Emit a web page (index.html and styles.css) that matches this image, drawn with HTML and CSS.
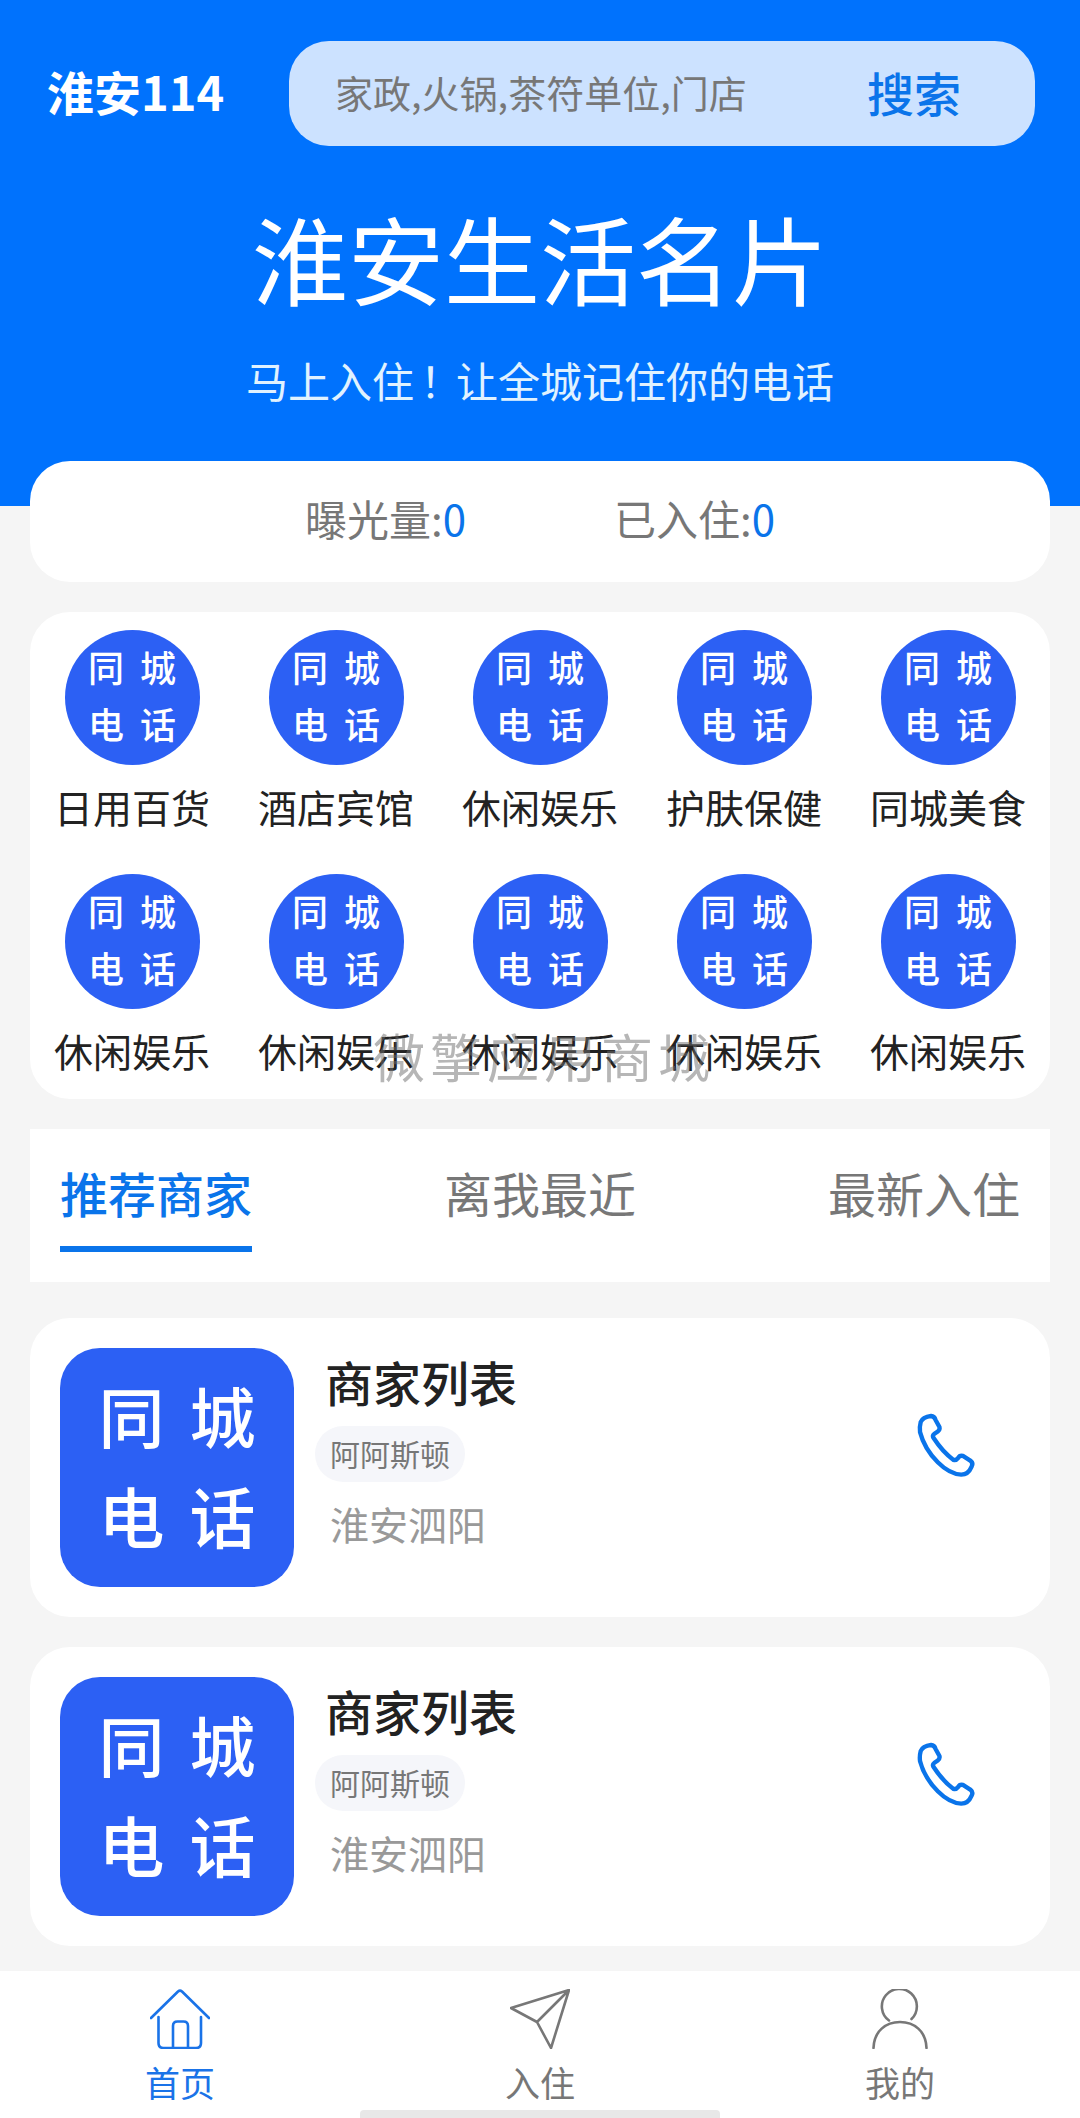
FILE: index.html
```html
<!DOCTYPE html>
<html lang="zh-CN">
<head>
    <meta charset="UTF-8">
    <meta name="viewport" content="width=device-width, initial-scale=1.0">
    <title>淮安生活名片</title>
    <link rel="stylesheet" href="styles.css">
</head>
<body>
    <header class="header">
        <div class="top-bar">
            <div class="logo">淮安114</div>
            <div class="search">
                <span class="search-hint">家政,火锅,茶符单位,门店</span>
                <span class="search-btn">搜索</span>
            </div>
        </div>
        <h1>淮安生活名片</h1>
        <p>马上入住<span class="bang">！</span>让全城记住你的电话</p>
    </header>

    <main class="main">
        <section class="stats">
            <div>曝光量:<span class="num">0</span></div>
            <div>已入住:<span class="num">0</span></div>
        </section>

        <section class="cats">
            <div class="cat"><div class="badge">同 城<br>电 话</div><span>日用百货</span></div>
            <div class="cat"><div class="badge">同 城<br>电 话</div><span>酒店宾馆</span></div>
            <div class="cat"><div class="badge">同 城<br>电 话</div><span>休闲娱乐</span></div>
            <div class="cat"><div class="badge">同 城<br>电 话</div><span>护肤保健</span></div>
            <div class="cat"><div class="badge">同 城<br>电 话</div><span>同城美食</span></div>
            <div class="cat"><div class="badge">同 城<br>电 话</div><span>休闲娱乐</span></div>
            <div class="cat"><div class="badge">同 城<br>电 话</div><span>休闲娱乐</span></div>
            <div class="cat"><div class="badge">同 城<br>电 话</div><span>休闲娱乐</span></div>
            <div class="cat"><div class="badge">同 城<br>电 话</div><span>休闲娱乐</span></div>
            <div class="cat"><div class="badge">同 城<br>电 话</div><span>休闲娱乐</span></div>
        </section>

        <nav class="tabs">
            <a class="tab active">推荐商家</a>
            <a class="tab">离我最近</a>
            <a class="tab">最新入住</a>
        </nav>

        <ul class="shops">
            <li class="shop">
                <div class="shop-logo">同 城<br>电 话</div>
                <div class="shop-info">
                    <h3>商家列表</h3>
                    <span class="tag">阿阿斯顿</span>
                    <p>淮安泗阳</p>
                </div>
                <svg class="phone" viewBox="170 95 185 200" width="62" height="67" fill="none" stroke="#0a74ea" stroke-width="13" stroke-linejoin="round">
                    <path d="M184 125Q190 110 215 107Q225 108 228 118L240 140Q242 148 235 153L225 160Q218 165 222 172Q250 215 282 238Q290 240 296 232Q300 224 310 226L332 240Q342 248 336 258Q326 282 305 282Q270 280 235 245Q195 205 182 155Q180 140 184 125Z"/>
                </svg>
            </li>
            <li class="shop">
                <div class="shop-logo">同 城<br>电 话</div>
                <div class="shop-info">
                    <h3>商家列表</h3>
                    <span class="tag">阿阿斯顿</span>
                    <p>淮安泗阳</p>
                </div>
                <svg class="phone" viewBox="170 95 185 200" width="62" height="67" fill="none" stroke="#0a74ea" stroke-width="13" stroke-linejoin="round">
                    <path d="M184 125Q190 110 215 107Q225 108 228 118L240 140Q242 148 235 153L225 160Q218 165 222 172Q250 215 282 238Q290 240 296 232Q300 224 310 226L332 240Q342 248 336 258Q326 282 305 282Q270 280 235 245Q195 205 182 155Q180 140 184 125Z"/>
                </svg>
            </li>
        </ul>
    </main>

    <div class="watermark">微擎应用商城</div>

    <footer class="tabbar">
        <a class="tabbar-item active">
            <svg viewBox="0 0 60 60" width="60" height="60" fill="none" stroke="#1a73e8" stroke-width="2.6" stroke-linecap="round" stroke-linejoin="round">
                <path d="M1 29L28 2.500Q30 .8 32 2.500L59 29"/>
                <path d="M8.500 28V54Q8.500 59 13.500 59H46Q51 59 51 54V28"/>
                <path d="M23 59V37Q23 32.500 27.500 32.500H33.500Q38 32.500 38 37V59"/>
            </svg>
            <span>首页</span>
        </a>
        <a class="tabbar-item">
            <svg viewBox="0 0 60 60" width="60" height="60" fill="none" stroke="#777" stroke-width="2.6" stroke-linecap="round" stroke-linejoin="round">
                <path d="M59 1L1 19L27 33L41 59ZM59 1L27 33"/>
            </svg>
            <span>入住</span>
        </a>
        <a class="tabbar-item">
            <svg viewBox="0 0 60 60" width="60" height="60" fill="none" stroke="#777" stroke-width="2.6" stroke-linecap="round" stroke-linejoin="round">
                <path d="M41.500 30A17.500 17.500 0 1 0 19 31.500"/>
                <path d="M3.500 59C4 42 16 33 30 33C44 33 56 42 56.500 59"/>
            </svg>
            <span>我的</span>
        </a>
        <div class="home-bar"></div>
    </footer>
</body>
</html>
```

FILE: styles.css
```css
* {
    margin: 0;
    padding: 0;
    box-sizing: border-box;
    font-family: "Noto Sans CJK SC", "Noto Sans", sans-serif;
}
body {
    background: #f5f5f5;
    width: 1080px;
    height: 2118px;
    overflow: hidden;
    position: relative;
    display: flex;
    flex-direction: column;
}
.header {
    background: #0072fd;
    flex: none;
    height: 506px;
    padding-top: 41px;
    color: white;
    text-align: center;
}
.top-bar {
    display: flex;
    align-items: center;
    justify-content: space-between;
    padding: 0 45px 0 47px;
}
.logo {
    font-size: 47px;
    font-weight: 700;
    line-height: 100px;
    padding-bottom: 5px;
}
.search {
    width: 746px;
    height: 105px;
    background: #cce2ff;
    border-radius: 40px;
    display: flex;
    align-items: center;
    justify-content: space-between;
    padding: 0 74px 5px 46px;
}
.search-hint {
    font-size: 38px;
    color: #777;
}
.search-btn {
    font-size: 47px;
    font-weight: 500;
    color: #0a74ea;
}
.header h1 {
    font-size: 96px;
    font-weight: 400;
    line-height: 120px;
    margin-top: 51px;
}
.header p {
    font-size: 42px;
    line-height: 60px;
    margin-top: 33px;
    color: #e0f2ff;
}
.bang {
    display: inline-block;
    margin: 0 -6px 0 6px;
}
.main {
    flex: 1;
    min-height: 0;
    padding: 0 30px;
}
.stats {
    background: white;
    height: 121px;
    margin-top: -45px;
    border-radius: 40px;
    display: flex;
    align-items: center;
    justify-content: center;
    gap: 148px;
    font-size: 42px;
    color: #777;
    padding-bottom: 8px;
    position: relative;
}
.num {
    color: #0a74ea;
}
.cats {
    background: white;
    border-radius: 40px;
    margin-top: 30px;
    padding: 18px 0 20px;
    display: grid;
    grid-template-columns: repeat(5, 204px);
    row-gap: 39px;
}
.cat {
    display: flex;
    flex-direction: column;
    align-items: center;
}
.cat span {
    font-size: 39px;
    line-height: 54px;
    margin: 14px 0 2px;
    color: #222;
}
.badge {
    width: 135px;
    height: 135px;
    border-radius: 50%;
    background: #2c60f4;
    color: white;
    font-size: 36px;
    font-weight: 500;
    line-height: 57px;
    word-spacing: 8px;
    padding-bottom: 5px;
    text-align: center;
    display: flex;
    align-items: center;
    justify-content: center;
}
.tabs {
    background: white;
    margin-top: 30px;
    padding: 30px 30px 30px;
    display: flex;
    justify-content: space-between;
    align-items: flex-start;
}
.tab {
    font-size: 48px;
    line-height: 66px;
    color: #777;
    padding-bottom: 21px;
    border-bottom: 6px solid transparent;
}
.tab.active {
    color: #0a74ea;
    font-weight: 500;
    border-bottom-color: #0a74ea;
}
.shops {
    list-style: none;
    margin-top: 36px;
}
.shop {
    background: white;
    border-radius: 40px;
    height: 299px;
    margin-bottom: 30px;
    padding: 30px 72px 30px 30px;
    display: flex;
}
.shop-logo {
    width: 234px;
    height: 239px;
    border-radius: 40px;
    background: #2c60f4;
    color: white;
    font-size: 66px;
    font-weight: 500;
    line-height: 100px;
    word-spacing: 10px;
    padding-bottom: 8px;
    display: flex;
    align-items: center;
    justify-content: center;
    text-align: center;
}
.shop-info {
    flex: 1;
    margin-left: 21px;
}
.shop-info h3 {
    font-size: 48px;
    font-weight: 500;
    line-height: 66px;
    padding-left: 10px;
    color: #222;
}
.tag {
    display: inline-block;
    background: #f5f6fa;
    margin-top: 12px;
    height: 56px;
    line-height: 54px;
    padding: 0 15px;
    border-radius: 28px;
    font-size: 30px;
    color: #777;
}
.shop-info p {
    font-size: 39px;
    line-height: 60px;
    margin-top: 11px;
    padding-left: 15px;
    color: #999;
}
.phone {
    margin-top: 64px;
}
.watermark {
    position: absolute;
    left: 373px;
    top: 1022px;
    font-size: 52px;
    line-height: 68px;
    letter-spacing: 5px;
    color: rgba(110, 110, 110, 0.5);
}
.tabbar {
    background: white;
    flex: none;
    height: 147px;
    padding-top: 18px;
    display: grid;
    grid-template-columns: repeat(3, 1fr);
    position: relative;
}
.tabbar-item {
    display: flex;
    flex-direction: column;
    align-items: center;
    gap: 13px;
    font-size: 35px;
    line-height: 40px;
    color: #777;
}
.tabbar-item.active {
    color: #1a73e8;
}
.home-bar {
    position: absolute;
    left: 360px;
    bottom: 0;
    width: 360px;
    height: 8px;
    background: #e8e8e8;
    border-radius: 4px 4px 0 0;
}
```
